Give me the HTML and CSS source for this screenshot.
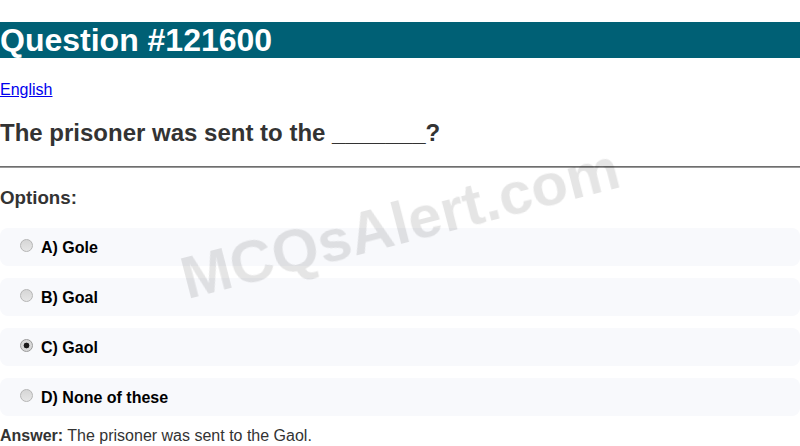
FILE: index.html
```html
<!DOCTYPE html>
<html lang="en">
<head>
<meta charset="utf-8">
<title>Question #121600</title>
<link rel="stylesheet" href="styles.css">
</head>
<body>
<h1 class="title">Question #121600</h1>
<p class="lang"><a href="#">English</a></p>
<h2 class="question">The prisoner was sent to the _______?</h2>
<hr class="rule">
<h3 class="options-title">Options:</h3>
<div class="options">
  <label class="option"><input class="radio" type="radio" name="q"><span>A) Gole</span></label>
  <label class="option"><input class="radio" type="radio" name="q"><span>B) Goal</span></label>
  <label class="option"><input class="radio" type="radio" name="q" checked><span>C) Gaol</span></label>
  <label class="option"><input class="radio" type="radio" name="q"><span>D) None of these</span></label>
</div>
<div class="answer"><strong>Answer:</strong> The prisoner was sent to the Gaol.</div>
<div class="watermark">MCQsAlert.com</div>
</body>
</html>
```
FILE: styles.css
```css
html, body {
  margin: 0;
  padding: 0;
}
body {
  font-family: "Liberation Sans", Arial, sans-serif;
  color: #333;
  background: #fff;
}
.title {
  font-size: 32px;
  line-height: 36px;
  font-weight: bold;
  margin: 22.4px 0 22.3px;
  background: #006075;
  color: #fff;
}
.lang {
  margin: 16px 0;
  font-size: 16px;
}
.lang a {
  color: #0000ee;
}
.question {
  font-size: 24px;
  margin: 20.5px 0 19px;
  color: #333;
}
.rule {
  margin: 8px 0 0;
  border: none;
  border-top: 1px solid #6e6e6e;
  border-bottom: 1px solid #9a9a9a;
}
.options-title {
  font-size: 18.72px;
  margin: 18.72px 0 19px;
  color: #333;
}
.options {
  display: flex;
  flex-direction: column;
  gap: 12px;
}
.option {
  display: flex;
  align-items: center;
  height: 38px;
  box-sizing: border-box;
  padding: 3px 15px 0;
  background: #f8f9fc;
  border-radius: 8px;
  font-weight: bold;
  font-size: 16px;
  color: #000;
}
.radio {
  appearance: none;
  -webkit-appearance: none;
  width: 13px;
  height: 13px;
  margin: 0 8px 5px 5px;
  border-radius: 50%;
  border: 1px solid #b5b5b5;
  background: linear-gradient(#d6d6d6, #e6e6e6);
  box-sizing: border-box;
  flex: none;
}
.radio:checked {
  background: radial-gradient(circle, #1a1a1a 0 2.6px, #d8d8d8 3.2px 100%);
  border-color: #9a9a9a;
}
.answer {
  margin-top: 11px;
  font-size: 16px;
  line-height: 18.4px;
  color: #333;
}
.watermark {
  position: fixed;
  left: 50%;
  top: 50%;
  transform: translate(-50%, -50%) rotate(-14.5deg);
  font-size: 60px;
  font-weight: bold;
  color: rgba(0, 0, 0, 0.1);
  white-space: nowrap;
  pointer-events: none;
}
```
